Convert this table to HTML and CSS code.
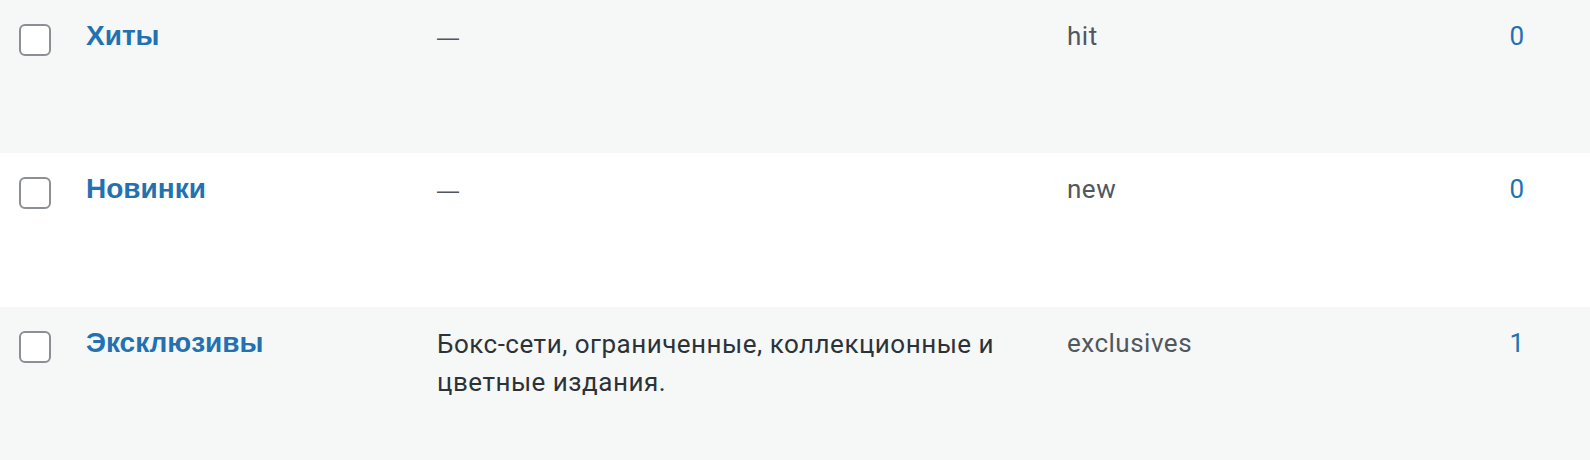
FILE: index.html
```html
<!DOCTYPE html>
<html lang="ru">
<head>
<meta charset="utf-8">
<link rel="stylesheet" href="styles.css">
</head>
<body>
<div class="list">
  <div class="row alt">
    <div class="cell cb"><span class="box"></span></div>
    <div class="cell name"><a class="title" href="#">Хиты</a></div>
    <div class="cell desc"><span class="dash">—</span></div>
    <div class="cell slug">hit</div>
    <div class="cell count"><a href="#">0</a></div>
  </div>
  <div class="row mid">
    <div class="cell cb"><span class="box"></span></div>
    <div class="cell name"><a class="title" href="#">Новинки</a></div>
    <div class="cell desc"><span class="dash">—</span></div>
    <div class="cell slug">new</div>
    <div class="cell count"><a href="#">0</a></div>
  </div>
  <div class="row alt">
    <div class="cell cb"><span class="box"></span></div>
    <div class="cell name"><a class="title" href="#">Эксклюзивы</a></div>
    <div class="cell desc"><p class="text">Бокс-сети, ограниченные, коллекционные и цветные издания.</p></div>
    <div class="cell slug">exclusives</div>
    <div class="cell count"><a href="#">1</a></div>
  </div>
</div>
</body>
</html>
```
FILE: styles.css
```css
html, body {
  margin: 0;
  padding: 0;
  background: #ffffff;
}
body {
  font-family: Roboto, "Noto Sans", sans-serif;
  font-size: 26px;
  letter-spacing: 0.5px;
  line-height: 37.8px;
  color: #50575e;
}
.list {
  display: flex;
  flex-direction: column;
}
.row {
  display: grid;
  grid-template-columns: 86px 351px 630px 412px 76px 1fr;
  height: 153px;
  background: #ffffff;
}
.row.alt {
  background: #f6f7f7;
}
.row.mid {
  height: 154px;
}
.cell {
  padding-top: 18px;
}
.cb {
  padding-top: 24px;
  padding-left: 19px;
}
.name {
  padding-top: 17px;
}
.box {
  display: block;
  width: 28px;
  height: 28px;
  border: 2px solid #8c8f94;
  border-radius: 6px;
  background: #ffffff;
}
.title {
  font-family: "Liberation Sans", Arial, sans-serif;
  font-weight: 700;
  font-size: 28px;
  letter-spacing: 0;
  color: #2271b1;
  text-decoration: none;
}
.dash {
  font-family: "Liberation Sans", Arial, sans-serif;
  font-size: 22px;
  letter-spacing: 0;
  color: #50575e;
}
.desc .text {
  margin: 0;
  padding-top: 1px;
  max-width: 610px;
  color: #2c3338;
}
.count {
  text-align: center;
}
.count a {
  color: #2271b1;
  text-decoration: none;
}
```
